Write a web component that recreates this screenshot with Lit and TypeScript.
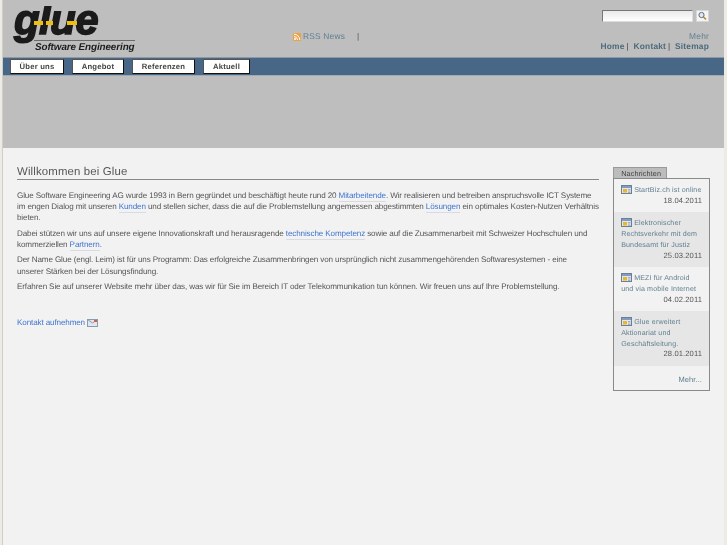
import { LitElement, html, css, svg } from "lit";
import { customElement } from "lit/decorators.js";

const newsIcon = svg`<svg class="ni" viewBox="0 0 11 9" width="11" height="9"><rect x=".5" y=".5" width="10" height="8" fill="#dfe8f2" stroke="#6f7f92"/><rect x="1" y="1" width="9" height="2" fill="#7f9cc4"/><rect x="2" y="4" width="4" height="3.5" fill="#f0b429"/><path d="M7 4.5h2.5M7 6h2.5M7 7.5h2.5" stroke="#8a97a8" stroke-width=".7"/></svg>`;

const news = [
  { t: "StartBiz.ch ist online", d: "18.04.2011", alt: false },
  { t: "Elektronischer Rechtsverkehr mit dem Bundesamt für Justiz", d: "25.03.2011", alt: true },
  { t: html`MEZI für Android<br />und via mobile Internet`, d: "04.02.2011", alt: false },
  { t: "Glue erweitert Aktionariat und Geschäftsleitung.", d: "28.01.2011", alt: true },
];

@customElement("app-root")
export class AppRoot extends LitElement {
  static styles = css`
    :host { display: block; height: 545px; overflow: hidden; background: #ecece4; font-family: "Liberation Sans", Arial, sans-serif; font-size: 8.1px; letter-spacing: -.13px; line-height: 11.1px; color: #555; text-rendering: geometricPrecision; }
    .page { height: 545px; margin: 0 3px 0 2px; border-left: 1px solid #cfcfc7; background: #f2f2f2; filter: blur(.3px); }
    .header { height: 57px; background: #bebebe; display: flex; justify-content: space-between; border-bottom: 1px solid #8d99a6; }
    .logo { width: 121px; margin: 1px 0 0 11px; display: flex; flex-direction: column; }
    .glue { position: relative; height: 39px; font: italic 900 42px/37px "Liberation Sans", sans-serif; letter-spacing: -.6px; color: #1b1b1b; -webkit-text-stroke: 1.6px #1b1b1b; clip-path: inset(5px -10px -10px -10px); }
    .dash { position: absolute; top: 20px; height: 4px; background: #eebf0c; }
    .tag { border-top: 1px solid #6a6a6a; margin-left: 20px; padding-left: 1px; font: italic 700 9.9px/13px "Liberation Sans", sans-serif; letter-spacing: -.1px; color: #1c1c1c; white-space: nowrap; position: relative; }
    .rss { margin: 31px 0 0 -48px; display: flex; align-items: center; height: 11px; font-size: 8.4px; letter-spacing: .2px; color: #5f7f90; width: 70px; }
    .rss svg { margin-right: 2px; }
    .rss i { font-style: normal; color: #555; margin-left: 12px; }
    .right { width: 140px; padding: 10px 15px 0 0; display: flex; flex-direction: column; align-items: flex-end; }
    .search { display: flex; gap: 3px; height: 12px; }
    .search .in { width: 89px; height: 10px; background: linear-gradient(#e9e9e9, #fff); border: 1px solid #777; border-color: #777 #ddd #ddd #777; }
    .search .btn { width: 11px; height: 10px; background: #f5f5f5; border: 1px solid #d5d5d5; display: flex; }
    .mehr { margin-top: 8.5px; font-size: 8.4px; letter-spacing: .2px; color: #5f7f90; line-height: 10.5px; }
    .links { font-size: 8.4px; font-weight: 700; line-height: 10.5px; letter-spacing: .2px; color: #4c6a7c; white-space: nowrap; }
    .links s { text-decoration: none; font-weight: 400; color: #444; margin: 0 2px 0 2px; }
    nav { height: 18px; background: #486686; display: flex; gap: 8px; padding-left: 7px; padding-bottom: 1px; align-items: center; box-sizing: border-box; border-bottom: 1px solid #9fa9b2; }
    nav a { background: #fff; border: 1px solid #222; border-color: #555 #111 #111 #555; box-sizing: border-box; height: 15px; font-weight: 700; font-size: 7.7px; line-height: 13px; letter-spacing: .2px; color: #444; text-align: center; }
    .banner { height: 72px; background: #bebebe; }
    .main { display: flex; padding: 16px 14px 0 14px; }
    .content { width: 583px; margin-right: 13px; }
    h1 { margin: 0 0 10px; font-weight: 400; font-size: 11.4px; line-height: 13px; padding-top: 2px; color: #555; letter-spacing: .15px; border-bottom: 1px solid #888; }
    p { margin: 0 0 4.5px; }
    a.l { color: #3f74d0; border-bottom: 1px solid #d8dce2; padding-bottom: 1px; }
    .contact { margin-top: 25px; color: #3f74d0; display: flex; align-items: center; gap: 2px; }
    .side { width: 97px; margin: 3px 0 0 1px; }
    .tab { height: 10px; background: #bcbcbc; border: 1px solid #999; border-bottom: 0; font-size: 7.3px; line-height: 11px; padding-left: 7px; width: 45px; color: #444; letter-spacing: .1px; }
    .box { border: 1px solid #8a8a8a; background: #f2f2f2; }
    .item { padding: 6px 7px 6px 7px; color: #5f7f90; font-size: 7.1px; line-height: 10.7px; letter-spacing: .14px; }
    .item.alt { background: #e6e6e6; }
    .ni { vertical-align: middle; margin: -2px 2px 0 0; }
    .date { text-align: right; color: #555; font-size: 7.6px; letter-spacing: .1px; }
    .more { text-align: right; padding: 8px 7px 5px; color: #5f7f90; font-size: 7.5px; letter-spacing: .1px; }
  `;
  render() {
    return html`<div class="page">
      <div class="header">
        <div class="logo">
          <div class="glue">glue<span class="dash" style="left:20px;width:9px"></span><span class="dash" style="left:32px;width:7px"></span><span class="dash" style="left:53px;width:10px"></span></div>
          <div class="tag">Software Engineering</div>
        </div>
        <div class="rss"><svg width="8" height="8" viewBox="0 0 8 8"><rect width="8" height="8" rx="1" fill="#f0a040"/><circle cx="2" cy="6" r="1" fill="#fff"/><path d="M1 3.5a3.5 3.5 0 0 1 3.5 3.5M1 1.2a5.8 5.8 0 0 1 5.8 5.8" stroke="#fff" fill="none"/></svg><span style="white-space:nowrap">RSS News</span><i>|</i></div>
        <div class="right">
          <div class="search"><div class="in"></div><div class="btn"><svg width="11" height="10" viewBox="0 0 11 10"><circle cx="4.5" cy="4" r="2.6" fill="#dfeaf5" stroke="#667"/><path d="M6.5 6 9 8.5" stroke="#b8862a" stroke-width="1.6"/></svg></div></div>
          <div class="mehr">Mehr</div>
          <div class="links">Home<s>|</s> Kontakt<s>|</s> Sitemap</div>
        </div>
      </div>
      <nav>
        <a style="width:54px">Über uns</a><a style="width:52px">Angebot</a><a style="width:63px">Referenzen</a><a style="width:47px">Aktuell</a>
      </nav>
      <div class="banner"></div>
      <div class="main">
        <div class="content">
          <h1>Willkommen bei Glue</h1>
          <p>Glue Software Engineering AG wurde 1993 in Bern gegründet und beschäftigt heute rund 20 <a class="l">Mitarbeitende</a>. Wir realisieren und betreiben anspruchsvolle ICT Systeme im engen Dialog mit unseren <a class="l">Kunden</a> und stellen sicher, dass die auf die Problemstellung angemessen abgestimmten <a class="l">Lösungen</a> ein optimales Kosten-Nutzen Verhältnis bieten.</p>
          <p>Dabei stützen wir uns auf unsere eigene Innovationskraft und herausragende <a class="l">technische Kompetenz</a> sowie auf die Zusammenarbeit mit Schweizer Hochschulen und<br />kommerziellen <a class="l">Partnern</a>.</p>
          <p>Der Name Glue (engl. Leim) ist für uns Programm: Das erfolgreiche Zusammenbringen von ursprünglich nicht zusammengehörenden Softwaresystemen - eine<br />unserer Stärken bei der Lösungsfindung.</p>
          <p>Erfahren Sie auf unserer Website mehr über das, was wir für Sie im Bereich IT oder Telekommunikation tun können. Wir freuen uns auf Ihre Problemstellung.</p>
          <div class="contact">Kontakt aufnehmen <svg width="11" height="8" viewBox="0 0 11 8"><rect x=".5" y=".5" width="10" height="7" fill="#dfe6f0" stroke="#8c9aae"/><path d="M.5.5 5.5 4l5-3.5" fill="none" stroke="#8c9aae"/><rect x="7" y="1" width="3" height="2" fill="#d0604a"/></svg></div>
        </div>
        <div class="side">
          <div class="tab">Nachrichten</div>
          <div class="box">
            ${news.map((n) => html`<div class="item ${n.alt ? "alt" : ""}">${newsIcon}${n.t}<div class="date">${n.d}</div></div>`)}
            <div class="more">Mehr...</div>
          </div>
        </div>
      </div>
    </div>`;
  }
}
